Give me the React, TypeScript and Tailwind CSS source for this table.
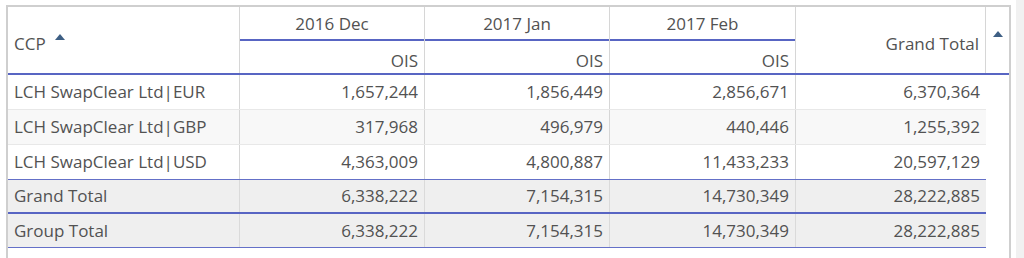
import React from "react";

const rows = [
  { name: "LCH SwapClear Ltd|EUR", v: ["1,657,244", "1,856,449", "2,856,671", "6,370,364"], bg: "bg-white" },
  { name: "LCH SwapClear Ltd|GBP", v: ["317,968", "496,979", "440,446", "1,255,392"], bg: "bg-[#f8f8f8]" },
  { name: "LCH SwapClear Ltd|USD", v: ["4,363,009", "4,800,887", "11,433,233", "20,597,129"], bg: "bg-white" },
];

const widths = ["w-[185px]", "w-[185px]", "w-[186px]", "w-[190px]"];

function Tri() {
  return (
    <svg width="10" height="6" viewBox="0 0 10 6" className="block">
      <polygon points="0,6 5,0 10,6" fill="#3e5f84" />
    </svg>
  );
}

export default function App() {
  return (
    <div
      className="w-[1024px] h-[258px] bg-white flex text-[#525252] text-[17px] leading-[22px] overflow-hidden"
      style={{ fontFamily: '"Open Sans", "Noto Sans", sans-serif' }}
    >
      <div className="ml-[6px] mt-[5px] w-[1005px] h-[253px] border-l-2 border-t-2 border-r-2 border-[#cfcfcf] flex flex-col">
        {/* header */}
        <div className="flex h-[68px] border-b-2 border-[#5865c3]">
          <div className="w-[232px] border-r border-[#d6d6d6] flex items-center pl-[6px] pt-[7px]">
            <span>CCP</span>
            <span className="ml-[9px] -mt-[13px]">
              <Tri />
            </span>
          </div>
          {["2016 Dec", "2017 Jan", "2017 Feb"].map((m, i) => (
            <div key={m} className={`${widths[i]} border-r border-[#d6d6d6] flex flex-col`}>
              <div className="h-[34px] border-b-2 border-[#5865c3] flex items-center justify-center pt-[2px]">
                {m}
              </div>
              <div className="h-[32px] flex items-center justify-end pr-[6px] pt-[7px]">OIS</div>
            </div>
          ))}
          <div className="w-[190px] border-r border-[#d6d6d6] flex items-center justify-end pr-[6px] pt-[7px]">
            Grand Total
          </div>
          <div className="flex-1 flex justify-center pt-[24px]">
            <Tri />
          </div>
        </div>
        {/* body */}
        <div className="w-[978px] flex flex-col">
          {rows.map((r, ri) => (
            <div
              key={r.name}
              className={`flex h-[35px] border-b ${ri === 2 ? "border-[#6470c8]" : "border-[#e8e8e8]"} ${r.bg}`}
            >
              <div className="w-[232px] border-r border-[#d6d6d6] flex items-center pl-[6px]">{r.name}</div>
              {r.v.map((v, i) => (
                <div
                  key={i}
                  className={`${widths[i]} ${i < 3 ? "border-r border-[#d6d6d6]" : ""} flex items-center justify-end pr-[6px]`}
                >
                  {v}
                </div>
              ))}
            </div>
          ))}
          {[
            { name: "Grand Total", cls: "border-b-2 border-[#5865c3]" },
            { name: "Group Total", cls: "border-b border-[#6470c8]" },
          ].map((t) => (
            <div key={t.name} className={`flex h-[34px] ${t.cls} bg-[#efefef]`}>
              <div className="w-[232px] border-r border-[#dadada] flex items-center pl-[6px]">{t.name}</div>
              {["6,338,222", "7,154,315", "14,730,349", "28,222,885"].map((v, i) => (
                <div
                  key={i}
                  className={`${widths[i]} ${i < 3 ? "border-r border-[#dadada]" : ""} flex items-center justify-end pr-[6px]`}
                >
                  {v}
                </div>
              ))}
            </div>
          ))}
        </div>
      </div>
      <div className="ml-[5px] w-[8px] h-full bg-[#f1f1f1]" />
    </div>
  );
}
